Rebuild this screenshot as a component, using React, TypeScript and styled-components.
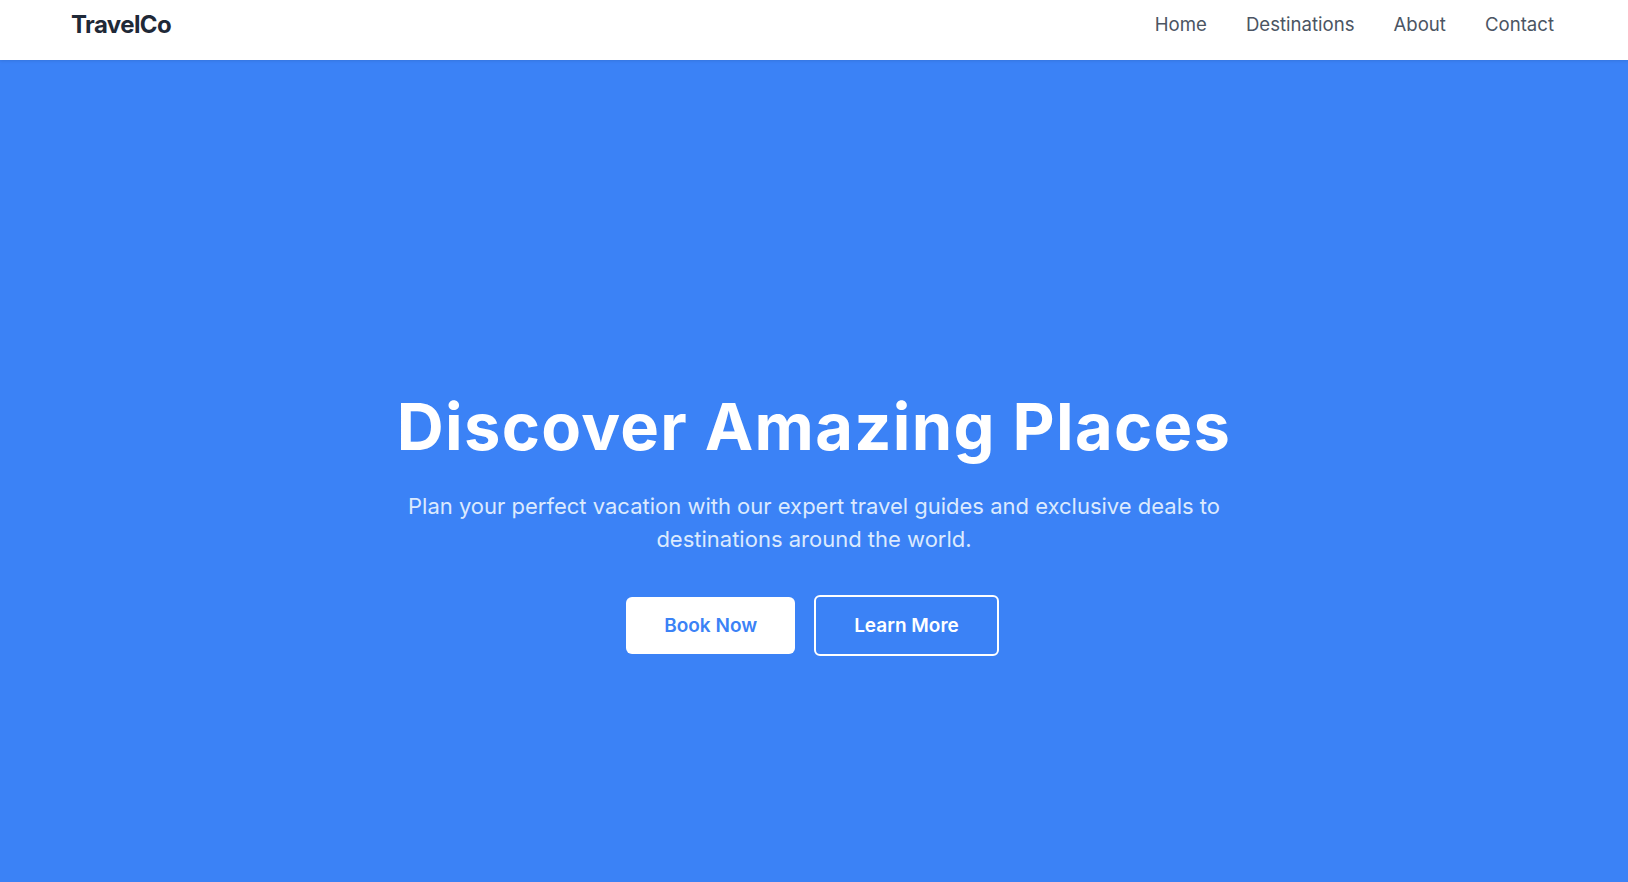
import React from 'react'
import styled, { createGlobalStyle } from 'styled-components'

const GlobalStyle = createGlobalStyle`
  * {
    box-sizing: border-box;
  }
  html, body {
    margin: 0;
    padding: 0;
    background: #3b82f6;
    font-family: Inter, "Noto Sans", "Liberation Sans", sans-serif;
  }
`

const links = ['Home', 'Destinations', 'About', 'Contact']

const App = () => {
  return (
    <>
      <GlobalStyle />
      <Page>
        <Header>
          <Logo>TravelCo</Logo>
          <Nav>
            {links.map((l) => (
              <NavLink key={l} href="#">{l}</NavLink>
            ))}
          </Nav>
        </Header>
        <Hero>
          <Title>Discover Amazing Places</Title>
          <Subtitle>
            Plan your perfect vacation with our expert travel guides and exclusive deals to destinations around the world.
          </Subtitle>
          <Actions>
            <Button primary>Book Now</Button>
            <Button>Learn More</Button>
          </Actions>
        </Hero>
      </Page>
    </>
  )
}

export default App

///-------------------------------------------------- Styled Components -------------------------------------------------->///

const Page = styled.div`
  min-height: 882px;
  display: flex;
  flex-direction: column;
`

const Header = styled.header`
  height: 60px;
  padding: 10px 74px 0 71px;
  background: #ffffff;
  display: flex;
  align-items: flex-start;
  justify-content: space-between;
  box-shadow: 0 1px 3px rgba(0, 0, 0, 0.1);
  position: relative;
  z-index: 1;
`

const Logo = styled.div`
  font-size: 24px;
  line-height: 29px;
  font-weight: 700;
  letter-spacing: -0.6px;
  color: #1f2937;
`

const Nav = styled.nav`
  display: flex;
  gap: 39px;
`

const NavLink = styled.a`
  font-size: 18.6px;
  line-height: 29px;
  color: #4b5563;
  text-decoration: none;
`

const Hero = styled.section`
  flex: 1;
  background: #3b82f6;
  display: flex;
  flex-direction: column;
  align-items: center;
  padding-top: 334px;
  text-align: center;
`

const Title = styled.h1`
  margin: 0 0 31px;
  font-size: 65px;
  line-height: 65px;
  font-weight: 700;
  letter-spacing: 1.3px;
  color: #ffffff;
`

const Subtitle = styled.p`
  margin: 0 0 39px;
  max-width: 880px;
  font-size: 22px;
  line-height: 33px;
  color: #dbeafe;
`

const Actions = styled.div`
  display: flex;
  align-items: center;
  gap: 19px;
  margin-right: 3px;
`

type ButtonProps = {
  primary?: boolean
}

const Button = styled.button<ButtonProps>`
  font-family: inherit;
  font-size: 19px;
  line-height: 27px;
  font-weight: 600;
  border-radius: 6px;
  cursor: pointer;
  padding: 15px 38px;
  background: ${(p) => (p.primary ? '#ffffff' : 'transparent')};
  color: ${(p) => (p.primary ? '#3b82f6' : '#ffffff')};
  border: ${(p) => (p.primary ? 'none' : '2px solid #ffffff')};
`
